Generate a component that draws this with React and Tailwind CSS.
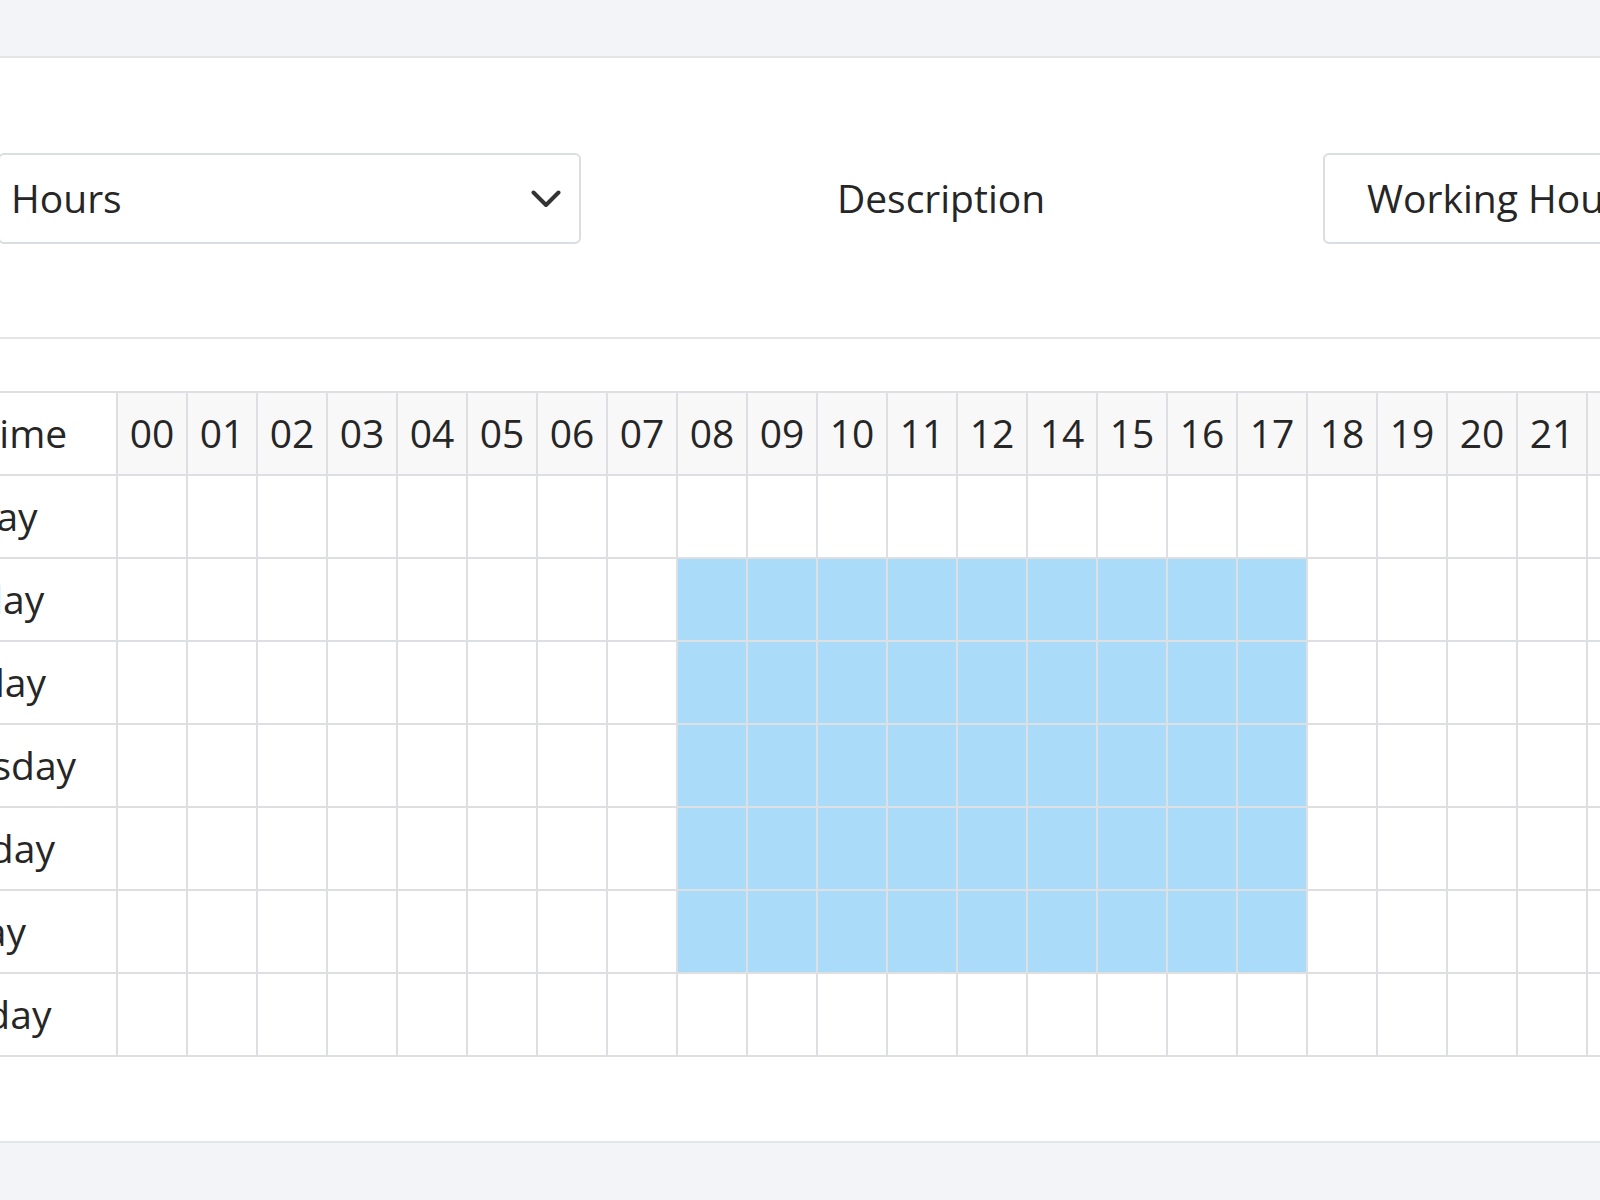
import React from "react";

const HOURS = ["00", "01", "02", "03", "04", "05", "06", "07", "08", "09", "10", "11", "12", "14", "15", "16", "17", "18", "19", "20", "21", "22", "23"];
const DAYS = ["Sunday", "Monday", "Tuesday", "Wednesday", "Thursday", "Friday", "Saturday"];
const WORK_DAYS = ["Monday", "Tuesday", "Wednesday", "Thursday", "Friday"];
const WORK_HOURS = ["08", "09", "10", "11", "12", "14", "15", "16", "17"];

function ChevronDown() {
  return (
    <svg width="30" height="18" viewBox="0 0 30 18" fill="none" stroke="#333" strokeWidth="4" strokeLinecap="round" strokeLinejoin="round">
      <polyline points="2.5,2.5 15,15 27.5,2.5" />
    </svg>
  );
}

function ScheduleGrid() {
  return (
    <div className="border-t-2 border-[#dedfe2]">
      {/* Header */}
      <div className="flex h-[83px] border-b-2 border-[#dedfe2]">
        <div className="w-[289px] shrink-0 border-r-2 border-[#dedfe2] bg-white flex items-center justify-center pr-[4px]">
          Day / Time
        </div>
        {HOURS.map((h) => (
          <div key={h} className="w-[70px] shrink-0 border-r-2 border-[#dedfe2] bg-[#f8f8f8] flex items-center justify-center">
            {h}
          </div>
        ))}
      </div>

      {/* Day rows */}
      {DAYS.map((day) => (
        <div key={day} className="flex h-[83px] border-b-2 border-[#dedfe2]">
          <div className="w-[289px] shrink-0 border-r-2 border-[#dedfe2] flex items-center justify-center pr-[4px]">
            {day}
          </div>
          {HOURS.map((h) => {
            const active = WORK_DAYS.includes(day) && WORK_HOURS.includes(h);
            return (
              <div
                key={h}
                className={`w-[70px] shrink-0 border-r-2 border-[#dedfe2] ${active ? "bg-[#aadcfa]" : "bg-white"}`}
              />
            );
          })}
        </div>
      ))}
    </div>
  );
}

export default function App() {
  return (
    <div className="h-[1200px] w-full overflow-hidden bg-[#f2f4f7] font-['Open_Sans',sans-serif] text-[39px] font-[380] text-[#262626]">
      <div className="h-[56px]" />
      <div className="border-y-2 border-[#e3e5e8] bg-white">
        <div className="-ml-[171px] w-[2000px]">
          {/* Form row */}
          <div className="border-b-2 border-[#e3e5e8] pt-[95px] pb-[93px]">
            <div className="flex items-center">
              <div className="ml-[169px] flex h-[91px] w-[583px] items-center justify-between rounded-md border-2 border-[#dadde1] pl-[11px] pr-[18px]">
                <span>Hours</span>
                <ChevronDown />
              </div>
              <div className="w-[742px] pr-[22px] text-center">Description</div>
              <div className="flex h-[91px] w-[500px] items-center rounded-md border-2 border-[#dadde1] pl-[42px]">
                Working Hours
              </div>
            </div>
          </div>

          {/* Grid */}
          <div className="pt-[52px] pb-[84px]">
            <ScheduleGrid />
          </div>
        </div>
      </div>
    </div>
  );
}
